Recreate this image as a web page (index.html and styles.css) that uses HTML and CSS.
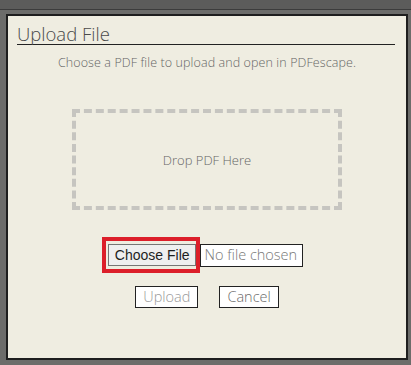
FILE: index.html
```html
<!DOCTYPE html>
<html>
<head>
    <title>Upload File</title>
    <link rel="stylesheet" href="styles.css">
</head>
<body>
    <div class="topbar"></div>
    <div class="dialog">
        <h2 class="dialog-title">Upload File</h2>
        <p class="hint">Choose a PDF file to upload and open in PDFescape.</p>
        <div class="dropzone">Drop PDF Here</div>
        <div class="file-row">
            <div class="highlight">
                <span class="choose-btn">Choose File</span>
            </div>
            <span class="file-name">No file chosen</span>
        </div>
        <div class="actions">
            <button class="btn btn-disabled">Upload</button>
            <button class="btn">Cancel</button>
        </div>
    </div>
</body>
</html>
```

FILE: styles.css
```css
body {
    margin: 0;
    background-color: #6c6c6a; /* dimmed page behind the dialog */
    font-family: "Open Sans", sans-serif;
    height: 365px;
    overflow: hidden;
}
.topbar {
    height: 9px;
    background-color: #5c5c5b;
    border-bottom: 1px solid #3c3c3c;
}
.dialog {
    margin: 4px 0 0 6px;
    width: 398px;
    height: 342px;
    background-color: #efede1; /* cream panel */
    border: 2px solid #1e1e1e;
    padding: 0;
    display: flex;
    flex-direction: column;
    align-items: center;
}
.dialog-title {
    align-self: stretch;
    margin: 8px 11px 0 9px;
    font-size: 18.5px;
    font-weight: 300;
    line-height: 20px;
    color: #4a4a4a;
    border-bottom: 1px solid #222;
    padding-bottom: 0;
}
.hint {
    margin: 9px 0 0 0;
    font-size: 12.5px;
    letter-spacing: 0.1px;
    font-weight: 300;
    color: #666;
}
.dropzone {
    margin-top: 38px;
    width: 262px;
    height: 93px;
    border: 4px dashed #c6c5c0;
    display: flex;
    align-items: center;
    justify-content: center;
    font-size: 13px;
    font-weight: 300;
    color: #666;
}
.file-row {
    margin-top: 27px;
    display: flex;
    align-items: center;
    margin-left: -9px;
}
.highlight {
    border: 4px solid #dc1f2a;
    padding: 3px 0 3px 2px;
}
.choose-btn {
    display: block;
    font-family: "Liberation Sans", Arial, sans-serif;
    font-size: 14px;
    color: #1e1e1e;
    background-color: #efefef;
    border: 1px solid #767676;
    padding: 2px 5px 2px 6px;
    line-height: 16px;
}
.file-name {
    border: 1px solid #222;
    background-color: #fff;
    font-size: 14.5px;
    font-weight: 300;
    color: #777;
    padding: 1px 5px 2px 4px;
    line-height: 18px;
}
.actions {
    margin-top: 13px;
    display: flex;
    gap: 21px;
}
.btn {
    font-family: "Open Sans", sans-serif;
    font-size: 14.5px;
    font-weight: 300;
    color: #6c6c6c;
    background-color: #fff;
    border: 1px solid #222;
    border-radius: 0;
    padding: 1px 7px 1px 7px;
    line-height: 18px;
}
.btn-disabled {
    color: #9a9a9a;
}
```
